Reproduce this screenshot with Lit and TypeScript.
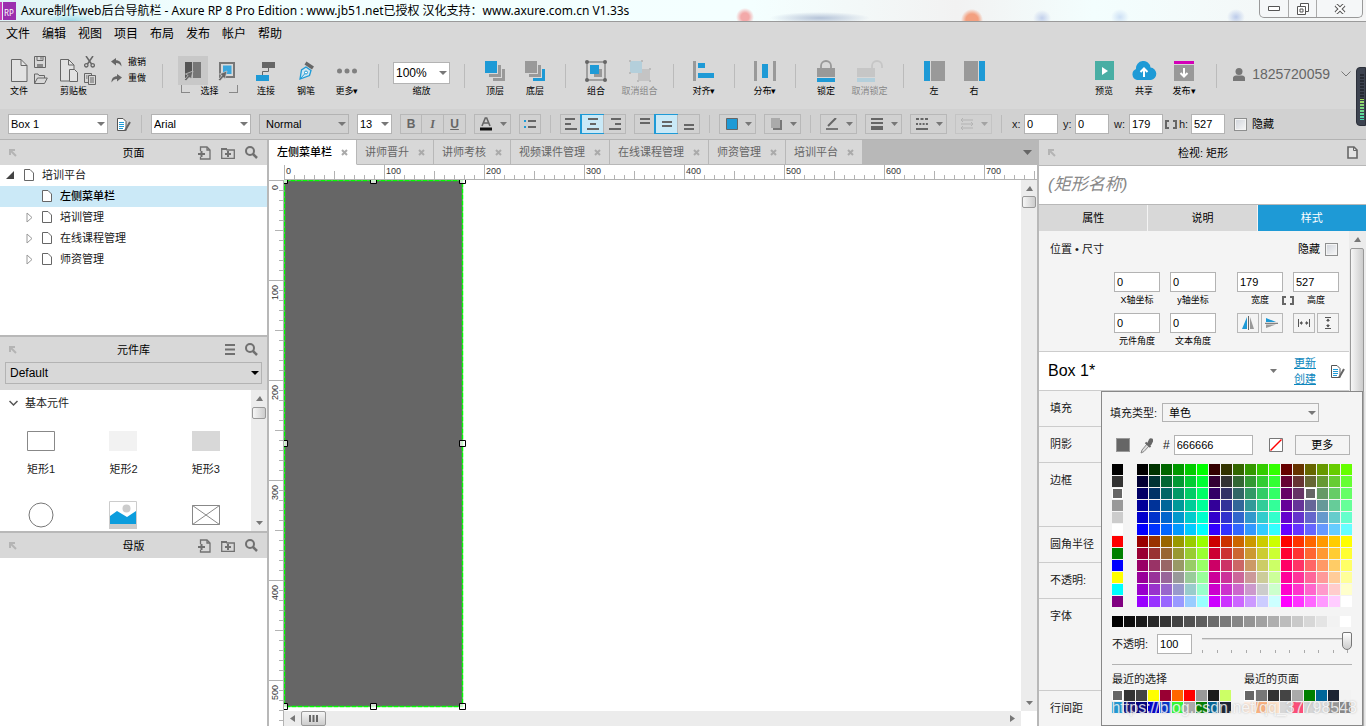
import { LitElement, html, css, svg, nothing, TemplateResult } from "lit";
import { customElement, property, state } from "lit/decorators.js";
import { classMap } from "lit/directives/class-map.js";

const icon = (w: number, h: number, body: unknown) =>
  html`<svg width=${w} height=${h} viewBox="0 0 ${w} ${h}" aria-hidden="true">${body}</svg>`;

const page = (w = 10, h = 12) =>
  icon(w, h, svg`<path d="M.5.5H${w - 4}L${w - 0.5} 4V${h - 0.5}H.5Z" fill="#fff" stroke="#666"/><path d="M${w - 4}.5V4H${w - 0.5}" fill="none" stroke="#666"/>`);
const corner = icon(8, 8, svg`<path d="M1 6V1H6M1.500 1.500L7 7" fill="none" stroke="#b4b4b4" stroke-width="2"/>`);
const search = icon(13, 13, svg`<circle cx="5" cy="5" r="4" fill="none" stroke="#707070" stroke-width="2"/><path d="M8 8L12 12" stroke="#707070" stroke-width="2.500"/>`);
const addPage = icon(13, 14, svg`<path d="M2.500 5V1H9L12 4V13H2.500V11" fill="none" stroke="#707070" stroke-width="1.300"/><path d="M9 1V4H12" fill="none" stroke="#707070" stroke-width="1.300"/><path d="M0 8H7M3.500 5V11" fill="none" stroke="#707070" stroke-width="2"/>`);
const addFolder = icon(14, 12, svg`<path d="M.7 11.300V1.700H5L6 3H13.300V11.300Z" fill="none" stroke="#707070" stroke-width="1.300"/><path d="M0 1H6V3H0Z" fill="#707070"/><path d="M4 7H10M7 4V10" stroke="#707070" stroke-width="2"/>`);
const burger = icon(10, 11, svg`<path d="M0 1H10M0 5.500H10M0 10H10" stroke="#707070" stroke-width="2"/>`);
const edit = icon(14, 13, svg`<path d="M.5.5H6L9 3.500V12.500H.5Z" fill="#fff" stroke="#555"/><path d="M2 4.500H7M2 6.500H7M2 8.500H7M2 10.500H6" stroke="#1e9ad6"/><path d="M13 4L9 11L8 12.500" stroke="#666" stroke-width="2" fill="none"/>`);
const brackets = icon(12, 9, svg`<path d="M4 1H1V8H4M8 1H11V8H8" fill="none" stroke="#666" stroke-width="2"/>`);
const newFile = icon(17, 23, svg`<path d="M.5.5H10L16 6.500V22.500H.5Z" fill="#e2e2e2" stroke="#666"/><path d="M10 .5V6.500H16" fill="none" stroke="#666"/>`);
const save = icon(12, 12, svg`<path d="M.5.5H11.500V11.500H.5Z" fill="none" stroke="#666"/><path d="M3 .5V4.500H9V.5M7 1V3.500" fill="none" stroke="#666"/><path d="M3 8H9V11H3Z" fill="#888"/>`);
const openIcon = icon(14, 11, svg`<path d="M.5 10.500V1H4L5 2.500H10.500V5M.5 10.500L3.500 5H13.300L10.500 10.500Z" fill="none" stroke="#666"/>`);
const clip = icon(18, 23, svg`<path d="M9 22H.5V.5H8.500L14 6V11" fill="#e2e2e2" stroke="#666"/><path d="M8.500 .5V6H14" fill="none" stroke="#666"/><path d="M9.500 10.500H14.500L17.500 13.500V22.500H9.500Z" fill="#e2e2e2" stroke="#666"/>`);
const cut = icon(11, 12, svg`<path d="M2 0L7.500 8M9 0L3.500 8" stroke="#666" stroke-width="1.500"/><circle cx="2.300" cy="9.300" r="1.700" fill="none" stroke="#666" stroke-width="1.300"/><circle cx="8.700" cy="9.300" r="1.700" fill="none" stroke="#666" stroke-width="1.300"/>`);
const copy = icon(12, 12, svg`<path d="M4 9.500H.5V.5H7.500V2.500" fill="none" stroke="#666"/><path d="M4.500 2.500H11.500V11.500H4.500ZM6 5H10M6 7H10M6 9H10M2 3H3.500M2 5H3.500" fill="none" stroke="#666"/>`);
const undo = icon(11, 9, svg`<path d="M0 3.500L5 0V2.300C8.500 2.300 10.500 4.500 10.500 8.500C9 6 7.500 5 5 5V7.500Z" fill="#666"/>`);
const redo = icon(11, 9, svg`<path d="M11 3.500L6 0V2.300C2.500 2.300.5 4.500.5 8.500C2 6 3.500 5 6 5V7.500Z" fill="#666"/>`);
const cursor = (x: number, y: number) => svg`<path transform="translate(${x} ${y})" d="M9 0L7 8L5.500 6L2 10L.5 8.500L4 4.500L1.500 3Z" fill="#666" stroke="#d0d0d0" stroke-width=".7"/>`;
const selTouch = icon(18, 20, svg`<path d="M1 1H8V17H1Z" fill="#555"/><path d="M8 1H17V17H8Z" fill="#777"/><path d="M8.500 1V17" stroke="#bbb"/>${cursor(0, 10)}`);
const selIn = icon(18, 20, svg`<path d="M2 2H16V16H2Z" fill="#d8d8d8" stroke="#777" stroke-width="2"/><path d="M5 4.500H13.500V13H5Z" fill="#3aa6dd"/>${cursor(0, 10)}`);
const connect = icon(20, 20, svg`<path d="M6 1H19V7H6Z" fill="#666"/><path d="M0 14H13V20H0Z" fill="#1e9ad6"/><path d="M12.500 7V10.500H6.500V14" fill="none" stroke="#666"/>`);
const pen = icon(16, 20, svg`<path d="M2 18L3.500 9L8 6L13 9.500L11.500 14.500Z" fill="#cfe6f2" stroke="#1e9ad6" stroke-width="1.300"/><path d="M2 18L7.500 12" stroke="#1e9ad6"/><circle cx="8" cy="11.500" r="1.500" fill="#fff" stroke="#1e9ad6"/><path d="M7.500 2L15 7" stroke="#666" stroke-width="3.500"/>`);
const dots = icon(20, 20, svg`<circle cx="2.500" cy="10" r="2.500" fill="#808080"/><circle cx="10" cy="10" r="2.500" fill="#808080"/><circle cx="17.500" cy="10" r="2.500" fill="#808080"/>`);
const stack = (a: string, b: string) => icon(20, 20, svg`<path d="M0 0H12V12H0Z" fill=${a}/><path d="M13 4H16V16H4V13H13Z" fill="#999"/><path d="M17 8H20V20H8V17H17Z" fill=${b}/>`);
const group = icon(22, 22, svg`<path d="M2 2H20V20H2Z" fill="none" stroke="#666"/><path d="M9 9H17V17H9Z" fill="#999"/><path d="M5 5H14V14H5Z" fill="#1e9ad6"/><g fill="#666"><circle cx="2" cy="2" r="2"/><circle cx="20" cy="2" r="2"/><circle cx="2" cy="20" r="2"/><circle cx="20" cy="20" r="2"/></g>`);
const ungroup = icon(22, 22, svg`<path d="M9 9H21V21H9Z" fill="#c4c4c4"/><path d="M1 1H13V13H1Z" fill="#b4cfdb"/><g fill="#bbb"><path d="M0 0h2v2H0zM12 0h2v2h-2zM0 12h2v2H0zM20 8h2v2h-2zM20 20h2v2h-2zM8 20h2v2H8z"/></g>`);
const alignI = icon(22, 20, svg`<path d="M0 0H3V20H0Z" fill="#999"/><path d="M5 2H12V7H5ZM5 12H21V17H5Z" fill="#1e9ad6"/>`);
const distI = icon(22, 20, svg`<path d="M0 0H3V20H0ZM19 0H22V20H19Z" fill="#999"/><path d="M8 3H14V17H8Z" fill="#1e9ad6"/>`);
const lock = icon(18, 22, svg`<path d="M4 9V6A5 5 0 0 1 14 6V9" fill="none" stroke="#999" stroke-width="1.800"/><path d="M0 8H18V17H0Z" fill="#999"/><path d="M0 18H18V22H0Z" fill="#1e9ad6"/>`);
const unlock = icon(26, 22, svg`<path d="M15 9V6A5 5 0 0 1 25 6V8" fill="none" stroke="#c6c6c6" stroke-width="1.800"/><path d="M0 8H18V17H0Z" fill="#c6c6c6"/><path d="M0 18H18V22H0Z" fill="#b4cfdb"/>`);
const leftI = icon(21, 20, svg`<path d="M0 0H6V20H0Z" fill="#1e9ad6"/><path d="M7 0H21V20H7Z" fill="#999"/>`);
const rightI = icon(21, 20, svg`<path d="M15 0H21V20H15Z" fill="#1e9ad6"/><path d="M0 0H14V20H0Z" fill="#999"/>`);
const preview = icon(19, 19, svg`<path d="M0 0H19V19H0Z" fill="#49aea4"/><path d="M7 6L13 10L7 14Z" fill="#fff"/>`);
const share = icon(26, 20, svg`<path d="M6 19A5.800 5.800 0 0 1 5 8A7 7 0 0 1 19.500 6.500A6.300 6.300 0 0 1 20 19Z" fill="#1e9ad6"/><path d="M13 16V8M9.500 11L13 7.500L16.500 11" fill="none" stroke="#fff" stroke-width="2"/>`);
const publish = icon(20, 20, svg`<path d="M0 0H20V3H0Z" fill="#d400b8"/><path d="M0 4H20V20H0Z" fill="#999"/><path d="M10 7V15M6.500 12L10 15.500L13.500 12" fill="none" stroke="#fff" stroke-width="2"/>`);
const user = icon(12, 13, svg`<circle cx="6" cy="3.500" r="3.500" fill="#777"/><path d="M0 13V10Q0 8 3 7.500H9Q12 8 12 10V13Z" fill="#777"/>`);
const chevron = icon(10, 6, svg`<path d="M.5.5L5 5L9.500.5" fill="none" stroke="#777"/>`);
const lines = (w: [number, number, number, number][], c = "#666") => icon(14, 12, svg`${w.map(([x1, x2, y, t]) => svg`<path d="M${x1} ${y}H${x2}" stroke=${c} stroke-width=${t}/>`)}`);
const alignL = lines([[1, 11, 1, 2], [1, 7, 6, 2], [1, 13, 11, 2]]);
const alignC = lines([[2, 12, 1, 2], [4, 10, 6, 2], [1, 13, 11, 2]]);
const alignR = lines([[3, 13, 1, 2], [7, 13, 6, 2], [1, 13, 11, 2]]);
const vTop = lines([[2, 12, 1, 2], [2, 12, 5, 2]]);
const vMid = lines([[2, 12, 4, 2], [2, 12, 8, 2]]);
const vBot = lines([[2, 12, 7, 2], [2, 12, 11, 2]]);
const bullets = icon(14, 12, svg`<path d="M1 3H3M1 9H3" stroke="#1e9ad6" stroke-width="2"/><path d="M5 3H13M5 9H13" stroke="#666" stroke-width="2"/>`);
const weightI = lines([[1, 13, 1, 2], [1, 13, 5, 2], [1, 13, 10, 4]]);
const dashI = icon(14, 12, svg`<path d="M1 1H13" stroke="#666" stroke-width="2" stroke-dasharray="3 1.500"/><path d="M1 6H13" stroke="#666" stroke-width="2" stroke-dasharray="2 1.300"/><path d="M1 11H13" stroke="#666" stroke-width="2"/>`);
const arrowsI = icon(14, 12, svg`<path d="M1 2H13M1 6H13M1 10H13M3 0L1 2L3 4M11 4L13 6L11 8M3 8L1 10L3 12" fill="none" stroke="#999"/>`);
const fillI = icon(14, 12, svg`<path d="M2.500.5H13.500V11.500H2.500Z" fill="#1e9ad6" stroke="#666"/>`);
const shadowI = icon(14, 12, svg`<path d="M4 2H13V12H4Z" fill="#777"/><path d="M2 0H11V10H2Z" fill="#aaa"/>`);
const lineI = icon(14, 12, svg`<path d="M1 11H13" stroke="#777" stroke-width="2"/><path d="M3 8L11 0" stroke="#666" stroke-width="2"/>`);
const fontI = icon(14, 14, svg`<path d="M3 9L6.300 1H7.700L11 9M4.500 6H9.500" fill="none" stroke="#666" stroke-width="1.600"/><path d="M1 12H13" stroke="#111" stroke-width="3"/>`);
const flipH = icon(12, 14, svg`<path d="M5 1V13H0Z" fill="#1e9ad6"/><path d="M8 1V13H12Z" fill="#999"/><path d="M6.500 0V14" stroke="#666"/>`);
const flipV = icon(14, 12, svg`<path d="M1 1L11 5H1Z" fill="#1e9ad6"/><path d="M1 11L11 7.500H1Z" fill="#999"/><path d="M0 6.300H13" stroke="#666"/>`);
const fitW = icon(12, 8, svg`<path d="M.5 0V8M11.500 0V8M5 4H2.500M7 4H9.500" stroke="#555"/><path d="M1.500 4L4 2V6ZM10.500 4L8 2V6Z" fill="#555"/>`);
const fitH = icon(8, 12, svg`<path d="M1 .5H7M1 11.500H7M4 2V5M4 7V10" stroke="#555"/><path d="M4 1.500L2 4H6ZM4 10.500L2 8H6Z" fill="#555"/>`);
const up = icon(7, 5, svg`<path d="M0 5L4 0L7 5Z" fill="#777"/>`);
const down = icon(7, 4, svg`<path d="M0 0H7L3.500 4Z" fill="#777"/>`);

const shared = css`
  * { box-sizing: border-box; }
  svg { display: block; flex: none; }
  button, input, select { font: inherit; color: inherit; margin: 0; border-radius: 0; }
  button { background: none; border: 0; padding: 0; }
  .pick { display: grid; flex: none; align-items: center; }
  .pick select {
    grid-area: 1 / 1; appearance: none; width: 100%; height: 100%;
    border: 1px solid #b3b3b3; background: #fff; padding: 0 2px; color: #000;
  }
  .pick::after {
    content: ""; grid-area: 1 / 1; justify-self: end; margin-right: 3px; pointer-events: none;
    border: 4px solid transparent; border-top-color: #777; border-bottom: 0;
  }
  .box { border: 1px solid #b3b3b3; background: #fff; height: 20px; padding: 0 2px; color: #000; font-size: 11px; }
  .check {
    appearance: none; width: 13px; height: 13px; flex: none; border: 1px solid #8e8f8f;
    background: linear-gradient(135deg, #cfd3da, #f8f8f8); box-shadow: inset 0 0 0 1px #f4f4f4;
  }
`;

const LEVELS = ["00", "33", "66", "99", "cc", "ff"];
const WEB: string[] = [];
for (const reds of [["00", "33", "66"], ["99", "cc", "ff"]])
  for (const b of LEVELS) for (const r of reds) for (const g of LEVELS) WEB.push(`#${r}${g}${b}`);
const BASIC = ["#000000", "#333333", "#666666", "#999999", "#cccccc", "#ffffff", "#ff0000", "#008000", "#0000ff", "#ffff00", "#00ffff", "#800080"];
const GREYS = Array.from({ length: 20 }, (_, i) => {
  const v = Math.round((i * 255) / 19);
  return `rgb(${v},${v},${v})`;
});
const RECENT = ["#666666", "#333333", "#444444", "#ffff00", "#990033", "#ff6600", "#ff0000", "#999999", "#1b1b1b", "#ccff66",
  "#1e9ad6", "#13137a", "#000080", "#0000cc", "#0033cc", "#33ff33", "#aaaaaa", "#008000", "#006699", "#1c2433"];
const ON_PAGES = ["#666666", "#777777", "#333333", "#444444", "#aaaaaa", "#008000", "#006699", "#1c2433", "#f2f2f2",
  "#ffeee2", "#ffb380", "#ffe4cc", "#d7d7d7", "#ff4d79", "#d7d7d7", "#e4e4e4", "#999999", "#888888"];

@customElement("fill-popup")
export class FillPopup extends LitElement {
  @property() value = "#666666";

  static styles = [shared, css`
    :host { display: flex; flex-direction: column; background: #f4f4f4; border: 1px solid #888; padding: 11px 10px; font-size: 11px; box-shadow: 1px 1px 1px #aaa; }
    .type { display: flex; align-items: center; gap: 5px; margin-left: -2px; }
    .type .pick { width: 157px; height: 19px; }
    .type select { background: #f4f4f4; padding-left: 6px; }
    .hex { display: flex; align-items: center; margin: 13px 0 9px 4px; }
    .current { width: 14px; height: 14px; border: 1px solid #999; }
    .dropper { margin: 0 10px; }
    .hash { font-size: 12px; margin-right: 4px; }
    .code { width: 79px; }
    .none { margin: 0 12px 0 16px; }
    .more { width: 55px; height: 20px; border: 1px solid #b3b3b3; color: #000; }
    .palettes { display: flex; gap: 14px; }
    .swatches { display: grid; gap: 1px; grid-auto-rows: 11px; justify-content: start; }
    .c1 { grid-template-columns: 11px; }
    .c18 { grid-template-columns: repeat(18, 11px); }
    .c20 { grid-template-columns: repeat(20, 11px); margin-top: 9px; }
    .c10 { grid-template-columns: repeat(10, 11px); }
    .c9 { grid-template-columns: repeat(9, 11px); }
    .swatch { width: 11px; height: 11px; }
    .on { border: 1px solid #fff; }
    .opacity { display: flex; align-items: center; height: 20px; margin-top: 7px; gap: 9px; }
    .opacity .box { width: 35px; }
    .slide { display: grid; flex: 1; align-items: start; height: 24px; }
    .slide svg, .slide input { grid-area: 1 / 1; }
    .slide input { appearance: none; width: 100%; height: 18px; background: none; }
    .slide input::-webkit-slider-thumb {
      appearance: none; width: 10px; height: 18px; border: 1px solid #777; border-radius: 2px 2px 5px 5px;
      background: linear-gradient(#fff, #ccc);
    }
    .recent { display: flex; gap: 13px; border-top: 1px solid #b3b3b3; margin-top: 10px; padding-top: 6px; }
    .recent section { display: flex; flex-direction: column; gap: 3px; line-height: 16px; }
  `];

  private grid(cols: number, colors: string[]) {
    let marked = false;
    return html`<div class="swatches c${cols}">${colors.map((c) => {
      const on = !marked && c === this.value;
      if (on) marked = true;
      return html`<button class=${classMap({ swatch: true, on })} style="background:${c}" aria-label=${c}></button>`;
    })}</div>`;
  }

  render() {
    return html`
      <div class="type"><label for="type">填充类型:</label><span class="pick"><select id="type"><option>单色</option></select></span></div>
      <div class="hex">
        <button class="current" style="background:${this.value}" aria-label="颜色"></button>
        <button class="dropper" aria-label="吸管">${icon(13, 17, svg`<path d="M7 7L2 13L1 16L4 14.500L9 9" fill="#ddd" stroke="#888"/><path d="M5.500 5.500L10.500 10" stroke="#666" stroke-width="2"/><path d="M9.500 6.500L11 3.500" stroke="#666" stroke-width="4.500" stroke-linecap="round"/>`)}</button>
        <label class="hash" for="code">#</label><input class="box code" id="code" .value=${this.value.slice(1)}>
        <button class="none" aria-label="无填充">${icon(14, 14, svg`<path d="M.5.5H13.500V13.500H.5Z" fill="#fff" stroke="#777"/><path d="M1.500 12.500L12.500 1.500" stroke="#f00" stroke-width="1.500"/>`)}</button>
        <button class="more">更多</button>
      </div>
      <div class="palettes">${this.grid(1, BASIC)}${this.grid(18, WEB)}</div>
      ${this.grid(20, GREYS)}
      <div class="opacity">
        <label for="op">不透明:</label><input class="box" id="op" value="100">
        <span class="slide">
          ${icon(150, 24, svg`<path d="M1 6.500H149" stroke="#b0b0b0"/><path d="M1 7.500H149" stroke="#ddd"/>${Array.from({ length: 11 }, (_, i) => svg`<path d="M${1.5 + Math.round(i * 14.5)} 18V21" stroke="#aaa"/>`)}`)}
          <input type="range" min="0" max="100" value="100" aria-label="不透明">
        </span>
      </div>
      <div class="recent">
        <section>最近的选择${this.grid(10, RECENT)}</section>
        <section>最近的页面${this.grid(9, ON_PAGES)}</section>
      </div>`;
  }
}

@customElement("app-root")
export class AppRoot extends LitElement {
  @state() private winW = window.innerWidth;
  @state() private winH = window.innerHeight;
  private onResize = () => {
    this.winW = window.innerWidth;
    this.winH = window.innerHeight;
  };
  connectedCallback() {
    super.connectedCallback();
    window.addEventListener("resize", this.onResize);
  }
  disconnectedCallback() {
    window.removeEventListener("resize", this.onResize);
    super.disconnectedCallback();
  }

  static styles = [shared, css`
    :host {
      display: flex; flex-direction: column; height: 100vh; min-height: 0; overflow: hidden; position: relative;
      background: #d8d8d8; color: #1a1a1a; font: 11px/16px "Liberation Sans", "Noto Sans CJK SC", sans-serif;
    }
    a { color: #0e87bd; }
    .title {
      display: flex; align-items: center; gap: 5px; height: 22px; flex: none; border-bottom: 1px solid #9a9a9a; color: #000;
      font: 12px/20px "Noto Sans", "Noto Sans CJK SC", sans-serif;
      background:
        radial-gradient(circle at 745px 17px, #f3a9a9 0 4px, transparent 9px),
        radial-gradient(circle at 972px 20px, #f3a080 0 6px, transparent 11px),
        radial-gradient(ellipse 50px 6px at 820px 18px, #b5c3d8, transparent),
        radial-gradient(ellipse 9px 8px at 1042px 18px, #c2d0ec, transparent),
        radial-gradient(ellipse 9px 8px at 1120px 17px, #cde0f5, transparent),
        radial-gradient(ellipse 9px 8px at 1236px 17px, #bccbea, transparent),
        radial-gradient(ellipse 30px 8px at 70px 21px, #9adbe8, transparent),
        linear-gradient(90deg, #dff2f5, #f2ffff 15%, #f4ffff 55%, #f2f2f2 70%, #f3fefe 80%, #f4f4f4);
    }
    .title h1 { font: inherit; margin: 0; }
    .win { display: flex; margin: 0 3px 0 auto; align-self: flex-start; border: 1px solid #999; border-top: 0; border-radius: 0 0 5px 5px; height: 18px; background: #f5f7f8; }
    .win button { display: grid; place-items: center; width: 28px; }
    .win button + button { border-left: 1px solid #aaa; }
    .win button:last-child { width: 46px; }
    .menu { display: flex; gap: 12px; height: 24px; flex: none; align-items: center; padding: 0 6px; font-size: 12px; color: #000; }
    .tools { display: flex; flex: none; height: 63px; padding: 10px 15px 0 0; font-size: 9px; line-height: 12px; color: #000; }
    .tool { display: flex; flex-direction: column; align-items: center; width: 40px; flex: none; }
    .pic { display: grid; place-items: center; height: 29px; }
    .tool.wide { width: 47px; color: #888; }
    .tool.others { width: 42px; }
    .tool.file { width: 30px; margin-left: 4px; }
    .tool.clip { width: 28px; margin-left: 12px; align-items: flex-start; }
    .side { display: flex; flex-direction: column; gap: 5px; width: 14px; }
    .side.far { margin-left: -4px; }
    .undo { display: flex; flex-direction: column; gap: 4px; margin-left: 13px; width: 41px; }
    .undo button { display: flex; align-items: center; gap: 6px; }
    .sep { width: 1px; height: 24px; background: #bbb; margin: 8px 10px 0; flex: none; }
    .choose { width: 73px; text-align: center; }
    .modes { display: flex; justify-content: center; gap: 4px; }
    .modes button { display: grid; place-items: center; width: 30px; height: 29px; }
    .modes .active { background: #c8c8c8; }
    .span { display: flex; justify-content: space-between; padding: 0 8px; }
    .span::before, .span::after { content: ""; width: 8px; height: 7px; border: 1px solid #888; border-top: 0; border-right: 0; }
    .span::after { border-left: 0; border-right: 1px solid #888; }
    .zoom { width: 65px; display: flex; flex-direction: column; align-items: center; }
    .zoom .pick { width: 57px; height: 22px; font-size: 12px; margin: 6px 0 1px; }
    .right { display: flex; margin-left: auto; }
    .right .sep { margin-left: 12px; }
    .account { display: flex; align-items: center; gap: 7px; height: 36px; font-size: 14px; color: #666; padding-left: 6px; }
    .account svg:last-child { margin-left: 4px; }
    .bar { display: flex; align-items: center; gap: 8px; height: 31px; flex: none; background: #d1d1d1; border-bottom: 1px solid #b3b3b3; padding: 0 8px; }
    .bar .pick { height: 20px; }
    .w100 { width: 100px; } .w90 { width: 90px; } .w35 { width: 35px; }
    .bar .w90 select { background: #d1d1d1; padding-left: 6px; }
    .bar .sep { height: 18px; margin: 0 1px; background: #bbb; }
    .bar .edit { width: 16px; padding-left: 1px; }
    .seg { display: flex; flex: none; border: 1px solid #b8b8b8; height: 20px; }
    .seg button { display: grid; place-items: center; width: 20px; color: #666; font-weight: bold; font-size: 12px; }
    .seg button + button { width: 22px; border-left: 1px solid #b8b8b8; }
    .seg .on { outline: 1px solid #1e9ad6; background: #c9e9f7; }
    .seg button.on { border-color: #1e9ad6; }
    .i { font-style: italic; font-family: "Liberation Serif", serif; } .u { text-decoration: underline; }
    .drop { display: flex; flex: none; align-items: center; justify-content: space-between; width: 37px; height: 20px; border: 1px solid #b8b8b8; padding: 0 3px 0 4px; }
    .dim { opacity: .5; }
    .nums { display: flex; align-items: center; margin-left: 1px; }
    .nums label { white-space: pre; width: 12px; }
    .nums .box { width: 34px; margin-right: 5px; }
    .nums label.w { width: 15px; }
    .nums .box.tight { margin-right: 2px; }
    .nums .box:last-child { margin-right: 1px; }
    .nums svg { margin-right: 2px; }
    .hide { display: flex; align-items: center; gap: 5px; color: #000; }
    .main { display: grid; grid-template-columns: 267px minmax(0, 1fr) 327px; gap: 2px; background: #b8b8b8; flex: 1; min-height: 0; }
    .left { display: grid; grid-template-rows: 195px 194px minmax(0, 1fr); gap: 2px; min-height: 0; }
    .panel { background: #fff; display: flex; flex-direction: column; min-height: 0; overflow: hidden; }
    .head { display: flex; align-items: center; height: 25px; flex: none; background: #d8d8d8; padding: 0 9px; color: #000; }
    .head > button:first-child { flex: 1 0 0; }
    .head h2 { font: inherit; margin: 0; }
    .acts { display: flex; flex: 1 0 0; justify-content: flex-end; align-items: center; gap: 10px; }
    .tree, .tree ul { list-style: none; margin: 0; padding: 0; }
    .row { display: flex; align-items: center; height: 21px; line-height: 14px; padding: 0 0 1px 6px; }
    .tree ul .row { padding-left: 24px; }
    .row .tw { width: 18px; display: flex; }
    .tree ul .tw { padding-left: 2px; }
    .row .name { margin-left: 8px; }
    .row.on { background: #cbe9f7; font-weight: 500; color: #000; }
    .lib { background: #d8d8d8; padding: 0 5px 6px; flex: none; }
    .lib .pick { height: 22px; font-size: 12px; color: #000; }
    .lib select { background: #d8d8d8; padding-left: 4px; }
    .lib .pick::after { border-top-color: #000; }
    .pane { display: flex; flex: 1; min-height: 0; }
    .items { flex: 1; min-width: 0; overflow: hidden; }
    .items h3 { display: flex; align-items: center; gap: 7px; font: inherit; margin: 0; height: 26px; padding-left: 9px; }
    .shapes { display: grid; grid-template-columns: repeat(3, minmax(0, 1fr)); grid-auto-rows: 74px; padding-right: 4px; }
    .shape { display: flex; flex-direction: column; align-items: center; justify-content: start; gap: 5px; padding-top: 10px; }
    .shape span { display: grid; place-items: center; height: 30px; }
    .sb { width: 16px; background: #ececec; display: flex; flex-direction: column; align-items: center; flex: none; padding: 6px 0; gap: 6px; }
    .thumb { width: 14px; height: 12px; border: 1px solid #999; border-radius: 2px; background: linear-gradient(90deg, #f6f6f6, #ccc); flex: none; }
    .sb svg:last-child { margin-top: auto; }
    .centre { display: flex; flex-direction: column; min-height: 0; background: #fff; }
    .tabs { display: flex; background: #b8b8b8; height: 25px; flex: none; }
    .tab { display: flex; align-items: center; gap: 9px; padding: 0 8px; background: #d8d8d8; border-right: 1px solid #b8b8b8; border-bottom: 1px solid #b8b8b8; color: #666; }
    .tab.on { background: #fff; border-bottom-color: #fff; color: #000; font-weight: 500; }
    .tabs .all { margin: 0 5px 0 auto; }
    .area { display: grid; grid-template-columns: 15px minmax(0, 1fr) 16px; grid-template-rows: 15px minmax(0, 1fr) 15px; flex: 1; min-height: 0; }
    .area > svg { width: 100%; height: 100%; font-size: 9px; }
    .ruler-x { grid-column: 2 / 4; }
    .ruler-y { grid-row: 2 / 4; }
    .canvas { position: relative; overflow: hidden; background: #fff; }
    .rect { position: absolute; left: 0; top: 0; width: 179px; height: 527px; background: #666; }
    .rect svg { overflow: visible; }
    .area .sb { padding: 6px 0; gap: 5px; }
    .hs { background: #ececec; display: flex; align-items: center; padding: 0 6px; gap: 6px; }
    .hs .grip { width: 25px; height: 15px; border: 1px solid #999; border-radius: 2px; background: linear-gradient(#f6f6f6, #ccc); display: grid; place-items: center; }
    .hs > svg:last-child { margin-left: auto; }
    .inspector { position: relative; display: flex; flex-direction: column; min-height: 0; background: #f4f4f4; overflow: hidden; }
    .inspector .head { border-bottom: 1px solid #b8b8b8; height: 26px; padding-right: 8px; }
    .nameit { height: 38px; border: 0; padding: 0 9px; font-size: 17px; font-style: italic; flex: none; background: #fff; }
    .nameit::placeholder { color: #888; }
    .switch { display: flex; height: 27px; border-top: 1px solid #b8b8b8; gap: 1px; flex: none; background: #f4f4f4; }
    .switch button { flex: 1; background: #d8d8d8; color: #000; }
    .switch .on { background: #1e9ad6; color: #fff; }
    .props { flex: 1; min-width: 0; }
    .props h3 { font: inherit; margin: 0; }
    .pos { height: 120px; padding: 10px 10px 0 11px; }
    .line { display: flex; justify-content: space-between; height: 31px; }
    .line .hide { align-self: flex-start; height: 16px; margin-right: 1px; }
    .fields { display: flex; justify-content: flex-end; gap: 21px; font-size: 9px; line-height: 12px; color: #000; }
    .pair { display: grid; grid-template-columns: 46px 46px; column-gap: 10px; justify-items: center; }
    .pair .box { width: 46px; margin-bottom: 2px; }
    .pair + .pair { align-content: start; }
    .pair label { height: 19px; white-space: nowrap; }
    .tie { grid-column: 1 / 3; width: 100%; display: flex; justify-content: space-between; padding: 0 14px; align-items: center; height: 19px; }
    .tie svg { margin-bottom: 7px; }
    .duo { display: flex; gap: 2px; }
    .duo button { width: 22px; height: 20px; border: 1px solid #b8b8b8; display: grid; place-items: center; }
    .stylebox { display: flex; align-items: center; height: 39px; border-top: 1px solid #ccc; background: #fff; padding: 0 4px 0 9px; color: #000; }
    .stylebox h3 { font-size: 16px; flex: 1; }
    .links { display: flex; flex-direction: column; margin: 0 15px 0 17px; }
    .prop { height: 36px; border-top: 1px solid #ccc; padding: 9px 11px; }
    .prop.mid { height: 64px; } .prop.tall { height: 92px; }
    .inspector .sb { width: 17px; padding: 6px 1px 0 0; }
    .inspector .thumb { height: 381px; }
    fill-popup { position: absolute; right: 3px; top: 251px; width: 262px; height: 335px; }
    .gadget { position: absolute; right: 0; top: 67px; width: 10px; height: 59px; border-radius: 4px 0 0 4px; background: #3d4350; border: 1px solid #2c303a; padding: 6px 1px 5px 3px; }
    .gadget i { display: block; height: 100%; background: repeating-linear-gradient(transparent 0 2px, #3d4350 2px 3px), linear-gradient(#262a33 0 55%, #a5d860 55%, #44d8b0); }
    .mark { position: absolute; right: 9px; bottom: 8px; font-size: 16px; line-height: 20px; color: #ffffffc8; text-shadow: 0 0 2px #7777; pointer-events: none; }
  `];

  private sel(id: string, cls: string, value: string, label: string) {
    return html`<span class="pick ${cls}"><select id=${id} aria-label=${label}><option>${value}</option></select></span>`;
  }
  private tool(pic: TemplateResult, label: string, cls = "") {
    return html`<button class="tool ${cls}"><span class="pic">${pic}</span>${label}</button>`;
  }
  private drop(pic: TemplateResult, label: string, dim = false) {
    return html`<button class=${classMap({ drop: true, dim })} aria-label=${label}>${pic}${down}</button>`;
  }
  private head(name: string, acts: unknown) {
    return html`<header class="head"><button aria-label="收起">${corner}</button><h2>${name}</h2><span class="acts">${acts}</span></header>`;
  }
  private row(name: string, twist: unknown, on = false) {
    return html`<div class=${classMap({ row: true, on })}><span class="tw">${twist}</span>${page()}<span class="name">${name}</span></div>`;
  }
  private ruler(vertical: boolean) {
    const length = vertical ? this.winH - 180 : this.winW - 613;
    const marks = Array.from({ length: Math.max(0, Math.ceil(length / 10)) }, (_, i) => i * 10);
    return html`<svg class=${vertical ? "ruler-y" : "ruler-x"} aria-hidden="true">${marks.map((p) => {
      const from = p % 100 === 0 ? 0 : p % 50 === 0 ? 6 : 10;
      const at = p + 0.5;
      const text = p % 100 === 0 && p + 24 < length;
      return svg`<path d=${vertical ? `M${from} ${at}H15` : `M${at} ${from}V15`} stroke="#b3b3b3"/>${!text ? nothing
        : vertical
          ? svg`<text transform="translate(9 ${p === 0 ? 10 : p + 20}) rotate(-90)" fill="#333">${p}</text>`
          : svg`<text x=${p + 2} y="9" fill="#333">${p}</text>`}`;
    })}${vertical ? svg`<path d="M14.500 0V${length}" stroke="#b3b3b3"/>` : svg`<path d="M0 14.500H${length}" stroke="#b3b3b3"/>`}</svg>`;
  }

  render() {
    const sep = html`<span class="sep"></span>`;
    const closed = icon(7, 11, svg`<path d="M1 1L6 5.500L1 10Z" fill="#fff" stroke="#999"/>`);
    const cross = icon(7, 7, svg`<path d="M1 1L6 6M6 1L1 6" stroke="#aaa" stroke-width="2"/>`);
    const handles = [[0, 0], [89, 0], [178, 0], [0, 263], [178, 263], [0, 526], [89, 526], [178, 526]];
    const shapes: [string, TemplateResult][] = [
      ["矩形1", icon(28, 20, svg`<path d="M.5.5H27.500V19.500H.5Z" fill="#fff" stroke="#888"/>`)],
      ["矩形2", icon(28, 20, svg`<path d="M0 0H28V20H0Z" fill="#f2f2f2"/>`)],
      ["矩形3", icon(28, 20, svg`<path d="M0 0H28V20H0Z" fill="#d8d8d8"/>`)],
      ["", icon(26, 26, svg`<circle cx="13" cy="13" r="12" fill="#fff" stroke="#777"/>`)],
      ["", icon(28, 28, svg`<path d="M.5.5H27.500V27.500H.5Z" fill="#fff" stroke="#ccc"/><circle cx="17.500" cy="7.500" r="4" fill="#ccc"/><path d="M1 15L8 10L18 16L27 10V23H1Z" fill="#0c9ddd"/><path d="M0 23H28V28H0Z" fill="#ccc"/>`)],
      ["", icon(28, 20, svg`<path d="M.5.5H27.500V19.500H.5ZM.5.5L27.500 19.500M27.500.5L.5 19.500" fill="#fff" stroke="#888"/>`)],
    ];
    return html`
      <header class="title">
        ${icon(16, 18, svg`<path d="M0 0H2V18H0Z" fill="#c83cb8"/><path d="M3 0H16V18H3Z" fill="#9b2fae"/><text x="4" y="14" font-size="8" fill="#fff">RP</text>`)}
        <h1>Axure制作web后台导航栏 - Axure RP 8 Pro Edition : www.jb51.net已授权 汉化支持：www.axure.com.cn V1.33s</h1>
        <span class="win">
          <button aria-label="最小化">${icon(12, 5, svg`<path d="M.5.5H11.500V4.500H.5Z" fill="#fff" stroke="#555"/>`)}</button>
          <button aria-label="还原">${icon(12, 12, svg`<path d="M3.500.5H11.500V8.500H3.500Z" fill="#fff" stroke="#555"/><path d="M.5 3.500H8.500V11.500H.5Z" fill="#fff" stroke="#555"/><path d="M3 6H6V9H3Z" fill="none" stroke="#555"/>`)}</button>
          <button aria-label="关闭">${icon(12, 10, svg`<path d="M2 1L10 9M10 1L2 9" stroke="#555" stroke-width="4"/><path d="M2 1L10 9M10 1L2 9" stroke="#fff" stroke-width="2"/>`)}</button>
        </span>
      </header>
      <nav class="menu">${["文件", "编辑", "视图", "项目", "布局", "发布", "帐户", "帮助"].map((m) => html`<button>${m}</button>`)}</nav>
      <div class="tools">
        ${this.tool(newFile, "文件", "file")}
        <span class="side"><button aria-label="保存">${save}</button><button aria-label="打开">${openIcon}</button></span>
        ${this.tool(clip, "剪贴板", "clip")}
        <span class="side far"><button aria-label="剪切">${cut}</button><button aria-label="复制">${copy}</button></span>
        <span class="undo"><button>${undo}撤销</button><button>${redo}重做</button></span>
        ${sep}
        <div class="choose"><div class="modes"><button class="active" aria-label="相交选择">${selTouch}</button><button aria-label="包含选择">${selIn}</button></div><div class="span">选择</div></div>
        ${this.tool(connect, "连接")}${this.tool(pen, "钢笔")}${this.tool(dots, "更多▾", "others")}
        ${sep}
        <div class="zoom">${this.sel("zoom", "", "100%", "缩放")}<label for="zoom">缩放</label></div>
        ${sep}${this.tool(stack("#1e9ad6", "#999"), "顶层")}${this.tool(stack("#999", "#1e9ad6"), "底层")}
        ${sep}${this.tool(group, "组合")}${this.tool(ungroup, "取消组合", "wide")}
        ${sep}${this.tool(alignI, "对齐▾")}
        ${sep}${this.tool(distI, "分布▾")}
        ${sep}${this.tool(lock, "锁定")}${this.tool(unlock, "取消锁定", "wide")}
        ${sep}${this.tool(leftI, "左")}${this.tool(rightI, "右")}
        <div class="right">${this.tool(preview, "预览")}${this.tool(share, "共享")}${this.tool(publish, "发布▾")}${sep}<button class="account">${user}1825720059${chevron}</button></div>
      </div>
      <div class="bar">
        ${this.sel("style", "w100", "Box 1", "样式")}<button class="edit" aria-label="编辑样式">${edit}</button>${sep}
        ${this.sel("font", "w100", "Arial", "字体")}${this.sel("face", "w90", "Normal", "字形")}${this.sel("size", "w35", "13", "字号")}
        <span class="seg"><button>B</button><button class="i">I</button><button class="u">U</button></span>
        ${this.drop(fontI, "文字颜色")}<span class="seg"><button aria-label="项目符号">${bullets}</button></span>${sep}
        <span class="seg"><button aria-label="左对齐">${alignL}</button><button class="on" aria-label="居中">${alignC}</button><button aria-label="右对齐">${alignR}</button></span>
        <span class="seg"><button aria-label="顶部">${vTop}</button><button class="on" aria-label="中部">${vMid}</button><button aria-label="底部">${vBot}</button></span>${sep}
        ${this.drop(fillI, "填充")}${this.drop(shadowI, "阴影")}${sep}
        ${this.drop(lineI, "线色")}${this.drop(weightI, "线宽")}${this.drop(dashI, "线型")}${this.drop(arrowsI, "箭头", true)}${sep}
        <span class="nums"><label for="x">x:</label><input class="box" id="x" value="0"><label for="y">y:</label><input class="box" id="y" value="0"><label class="w" for="w">w:</label><input class="box tight" id="w" value="179">${brackets}<label for="h">h:</label><input class="box" id="h" value="527"></span>
        <label class="hide"><input class="check" type="checkbox">隐藏</label>
      </div>
      <main class="main">
        <div class="left">
          <section class="panel">
            ${this.head("页面", html`<button aria-label="新页面">${addPage}</button><button aria-label="新文件夹">${addFolder}</button><button aria-label="搜索">${search}</button>`)}
            <ul class="tree"><li>${this.row("培训平台", icon(8, 8, svg`<path d="M8 0V8H0Z" fill="#444"/>`))}
              <ul><li>${this.row("左侧菜单栏", nothing, true)}</li>${["培训管理", "在线课程管理", "师资管理"].map((n) => html`<li>${this.row(n, closed)}</li>`)}</ul></li></ul>
          </section>
          <section class="panel">
            ${this.head("元件库", html`<button aria-label="菜单">${burger}</button><button aria-label="搜索">${search}</button>`)}
            <div class="lib">${this.sel("lib", "", "Default", "元件库")}</div>
            <div class="pane">
              <div class="items"><h3>${icon(9, 7, svg`<path d="M.5 1L4.500 5L8.500 1" fill="none" stroke="#555" stroke-width="1.500"/>`)}基本元件</h3>
                <div class="shapes">${shapes.map(([n, pic]) => html`<div class="shape"><span>${pic}</span>${n}</div>`)}</div></div>
              <div class="sb">${up}<span class="thumb"></span>${down}</div>
            </div>
          </section>
          <section class="panel">${this.head("母版", html`<button aria-label="新母版">${addPage}</button><button aria-label="新文件夹">${addFolder}</button><button aria-label="搜索">${search}</button>`)}</section>
        </div>
        <section class="centre">
          <div class="tabs">${["左侧菜单栏", "讲师晋升", "讲师考核", "视频课件管理", "在线课程管理", "师资管理", "培训平台"].map((t, i) => html`<div class=${classMap({ tab: true, on: i === 0 })}>${t}<button aria-label="关闭">${cross}</button></div>`)}<button class="all" aria-label="全部标签">${icon(9, 5, svg`<path d="M0 0H9L4.500 5Z" fill="#666"/>`)}</button></div>
          <div class="area">
            <span></span>${this.ruler(false)}${this.ruler(true)}
            <div class="canvas"><div class="rect">${icon(179, 527, svg`<path d="M.5.5H178.500V526.500H.5Z" fill="none" stroke="#999"/><path d="M.5.5H178.500V526.500H.5Z" fill="none" stroke="#0f0" stroke-width="1.500" stroke-dasharray="5 1"/>${handles.map(([x, y]) => svg`<path d="M${x - 2.5} ${y - 2.5}h6v6h-6z" fill="#ffffffc0" stroke="#000"/>`)}`)}</div></div>
            <div class="sb">${up}<span class="thumb"></span>${down}</div>
            <div class="hs">${icon(5, 7, svg`<path d="M5 0V7L0 3.500Z" fill="#777"/>`)}<span class="grip">${icon(9, 7, svg`<path d="M1 0V7M4.500 0V7M8 0V7" stroke="#666" stroke-width="2"/>`)}</span>${icon(5, 7, svg`<path d="M0 0V7L5 3.500Z" fill="#777"/>`)}</div>
          </div>
        </section>
        <section class="inspector">
          ${this.head("检视: 矩形", html`<button aria-label="页面">${icon(11, 13, svg`<path d="M1 1H7L10 4V12H1Z" fill="#e4e4e4" stroke="#666" stroke-width="1.600"/><path d="M6.500 1V4.500H10" fill="none" stroke="#666"/>`)}</button>`)}
          <input class="nameit" placeholder="(矩形名称)" aria-label="矩形名称">
          <div class="switch"><button>属性</button><button>说明</button><button class="on">样式</button></div>
          <div class="pane">
            <div class="props">
              <div class="pos">
                <div class="line"><h3>位置 • 尺寸</h3><label class="hide">隐藏<input class="check" type="checkbox"></label></div>
                <div class="fields">
                  <div class="pair"><input class="box" id="px" value="0"><input class="box" id="py" value="0"><label for="px">X轴坐标</label><label for="py">y轴坐标</label>
                    <input class="box" id="ra" value="0"><input class="box" id="rt" value="0"><label for="ra">元件角度</label><label for="rt">文本角度</label></div>
                  <div class="pair"><input class="box" id="pw" value="179"><input class="box" id="ph" value="527"><div class="tie"><label for="pw">宽度</label>${brackets}<label for="ph">高度</label></div>
                    <span class="duo"><button aria-label="水平翻转">${flipH}</button><button aria-label="垂直翻转">${flipV}</button></span><span class="duo"><button aria-label="适合宽度">${fitW}</button><button aria-label="适合高度">${fitH}</button></span></div>
                </div>
              </div>
              <div class="stylebox"><h3>Box 1*</h3>${down}<span class="links"><a href="#">更新</a><a href="#">创建</a></span><button aria-label="编辑样式">${edit}</button></div>
              <div class="prop">填充</div><div class="prop">阴影</div><div class="prop mid">边框</div><div class="prop">圆角半径</div><div class="prop">不透明:</div><div class="prop tall">字体</div><div class="prop">行间距</div>
            </div>
            <div class="sb">${up}<span class="thumb"></span></div>
          </div>
          <fill-popup></fill-popup>
        </section>
      </main>
      <div class="gadget"><i></i></div>
      <div class="mark">https://blog.csdn.net/qq_37798548</div>`;
  }
}
